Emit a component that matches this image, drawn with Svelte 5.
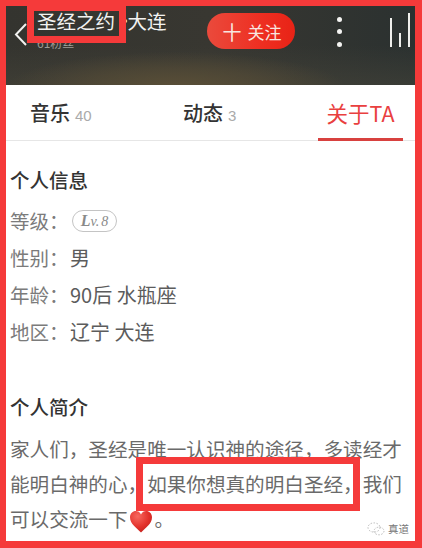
<script>
  const infoRows = [
    { label: '性别：', value: '男' },
    { label: '年龄：', value: '90后 水瓶座' },
    { label: '地区：', value: '辽宁 大连' }
  ];
</script>

<div class="frame">
  <header class="header">
    <svg class="back" width="14" height="26" viewBox="0 0 14 26"><path d="M12 2 L2 12.5 L12 23" fill="none" stroke="#f2f2f0" stroke-width="2"/></svg>
    <div class="titles">
      <div class="title">圣经之约<span class="dot">·</span>大连</div>
      <div class="fans">61粉丝</div>
    </div>
    <button class="follow"><span class="plus">十</span><span>关注</span></button>
    <div class="dots"><i></i><i></i><i></i></div>
    <div class="bars"><i class="b1"></i><i class="b2"></i><i class="b3"></i></div>
  </header>

  <nav class="tabs">
    <div class="tab t1">音乐<small>40</small></div>
    <div class="tab t2">动态<small>3</small></div>
    <div class="tab t3 active">关于TA</div>
  </nav>

  <main class="content">
    <h2 class="h-info">个人信息</h2>
    <div class="row"><span class="label">等级：</span><span class="badge"><b>L</b>v.<em>8</em></span></div>
    {#each infoRows as r}
      <div class="row"><span class="label">{r.label}</span><span class="value">{r.value}</span></div>
    {/each}
    <h2 class="h-intro">个人简介</h2>
    <p class="intro">家人们，圣经是唯一认识神的途径，多读经才能明白神的心，如果你想真的明白圣经，我们可以交流一下<svg class="heart" width="24" height="23" viewBox="0 0 24 23"><defs><radialGradient id="hg" cx="0.35" cy="0.25" r="0.9"><stop offset="0" stop-color="#f7685f"/><stop offset="0.55" stop-color="#e3322c"/><stop offset="1" stop-color="#b81c18"/></radialGradient></defs><path d="M12 22.5 C8 18 1 14 1 7.2 C1 3.4 3.8 1 6.8 1 C9 1 11 2.2 12 4.4 C13 2.2 15 1 17.2 1 C20.2 1 23 3.4 23 7.2 C23 14 16 18 12 22.5 Z" fill="url(#hg)"/></svg><span class="stop">。</span></p>
  </main>

  <div class="watermark">
    <svg width="18" height="14" viewBox="0 0 18 14"><g fill="none" stroke="#b9b9b9" stroke-width="1" stroke-dasharray="1.5 1.5"><ellipse cx="7" cy="5.5" rx="6" ry="4.6"/><ellipse cx="12" cy="9" rx="5" ry="3.8"/></g></svg>
    <span>真道</span>
  </div>
</div>

<div class="box box-title"></div>
<div class="box box-quote"></div>

<style>
  :global(body) {
    margin: 0;
    background: #fff;
  }
  .frame {
    position: relative;
    box-sizing: border-box;
    width: 422px;
    height: 548px;
    display: flex;
    flex-direction: column;
    border: solid #f53a3a;
    border-width: 6px 7px 7px 6px;
    background: #fff;
    overflow: hidden;
    font-family: "Noto Sans CJK SC", "Liberation Sans", sans-serif;
  }
  .header {
    position: relative;
    flex: 0 0 79px;
    box-sizing: border-box;
    display: flex;
    align-items: flex-start;
    padding: 7px 0 0 8px;
    color: #f2f2f0;
    background:
      radial-gradient(ellipse 170px 36px at 170px 82px, #5a4f37 0%, rgba(86, 76, 54, 0.6) 55%, rgba(60, 58, 50, 0) 100%),
      linear-gradient(180deg, rgba(52, 52, 47, 0) 50%, rgba(74, 72, 60, 0.45) 100%),
      linear-gradient(90deg, #34342f 0%, #383731 50%, #2b3130 100%);
  }
  .back {
    flex: none;
    margin-top: 9px;
  }
  .titles {
    flex: none;
    width: 166px;
    margin-left: 9px;
    margin-top: -2px;
  }
  .title {
    font-size: 19.5px;
    line-height: 20px;
    white-space: nowrap;
  }
  .dot {
    letter-spacing: -7px;
  }
  .fans {
    margin-top: 5px;
    font-size: 12px;
    line-height: 14px;
    color: #9c9c96;
  }
  .follow {
    flex: none;
    box-sizing: border-box;
    width: 88px;
    height: 36px;
    margin-left: 4px;
    padding: 0 0 0 2px;
    display: flex;
    align-items: center;
    justify-content: center;
    gap: 6px;
    border: 0;
    border-radius: 18px;
    background: linear-gradient(90deg, #ea4a3c 0%, #ee2f22 60%, #e82316 100%);
    color: #f8e6e0;
    font-family: inherit;
    font-size: 17px;
  }
  .plus {
    font-size: 19px;
    line-height: 1;
  }
  .dots {
    flex: none;
    display: flex;
    flex-direction: column;
    gap: 7.5px;
    margin: 3.5px 0 0 42px;
  }
  .dots i {
    width: 5px;
    height: 5px;
    border-radius: 50%;
    background: #f4f4f2;
  }
  .bars {
    flex: none;
    display: flex;
    align-items: flex-end;
    gap: 6.5px;
    height: 34px;
    margin: 0 0 0 47.5px;
  }
  .bars i {
    width: 2.5px;
    background: #efefec;
  }
  .b1 { height: 29px; }
  .b2 { height: 14px; }
  .b3 { height: 34px; }
  .tabs {
    position: relative;
    flex: 0 0 56px;
    box-sizing: border-box;
    border-bottom: 1px solid #e6e6e6;
    font-size: 20px;
    color: #333;
    font-weight: 500;
  }
  .tab {
    position: absolute;
    top: 11px;
    line-height: 34px;
    white-space: nowrap;
  }
  .tab small {
    margin-left: 5px;
    font-size: 15px;
    font-weight: 400;
    color: #aaa;
    font-family: "Liberation Sans", sans-serif;
  }
  .t1 { left: 24px; }
  .t2 { left: 177px; }
  .t3 {
    left: 312px;
    width: 85px;
    height: 45px;
    box-sizing: border-box;
    text-align: center;
    color: #e9403f;
    font-size: 21.5px;
    font-weight: 400;
    border-bottom: 3px solid #d8413f;
  }
  .content {
    padding: 0 0 0 4px;
  }
  h2 {
    margin: 0;
    font-size: 19.5px;
    font-weight: 500;
    color: #333;
    line-height: 28px;
  }
  .h-info { margin-top: 25px; }
  .h-intro { margin-top: 43px; }
  .row {
    display: flex;
    align-items: center;
    height: 37px;
    font-size: 19.5px;
    color: #7b7b7b;
  }
  .h-info + .row { margin-top: 8px; }
  .label {
    width: 60px;
  }
  .value {
    color: #5c5c5c;
    font-size: 20px;
  }
  .badge {
    box-sizing: border-box;
    width: 45px;
    height: 22px;
    margin-left: 2px;
    display: flex;
    align-items: baseline;
    justify-content: center;
    border: 1.5px solid #c4c4c4;
    border-radius: 11px;
    color: #8a8a8a;
    font-family: "Liberation Serif", serif;
    font-style: italic;
    font-size: 14px;
    line-height: 19px;
  }
  .badge b {
    font-size: 16px;
  }
  .badge em {
    margin-left: 2px;
  }
  .intro {
    margin: 10px 0 0;
    width: 396px;
    font-size: 19.6px;
    line-height: 35px;
    color: #6a6a6a;
  }
  .heart {
    vertical-align: -6px;
    margin-left: 1px;
  }
  .stop {
    margin-left: 2px;
  }
  .watermark {
    position: absolute;
    right: 6px;
    bottom: 5px;
    display: flex;
    align-items: center;
    gap: 3px;
    font-size: 10.5px;
    color: #777;
  }
  .box {
    position: absolute;
    box-sizing: border-box;
    border: 7px solid #f53a3a;
  }
  .box-title {
    left: 27px;
    top: 4px;
    width: 99px;
    height: 39px;
  }
  .box-quote {
    left: 136px;
    top: 457px;
    width: 224px;
    height: 54px;
  }
</style>
